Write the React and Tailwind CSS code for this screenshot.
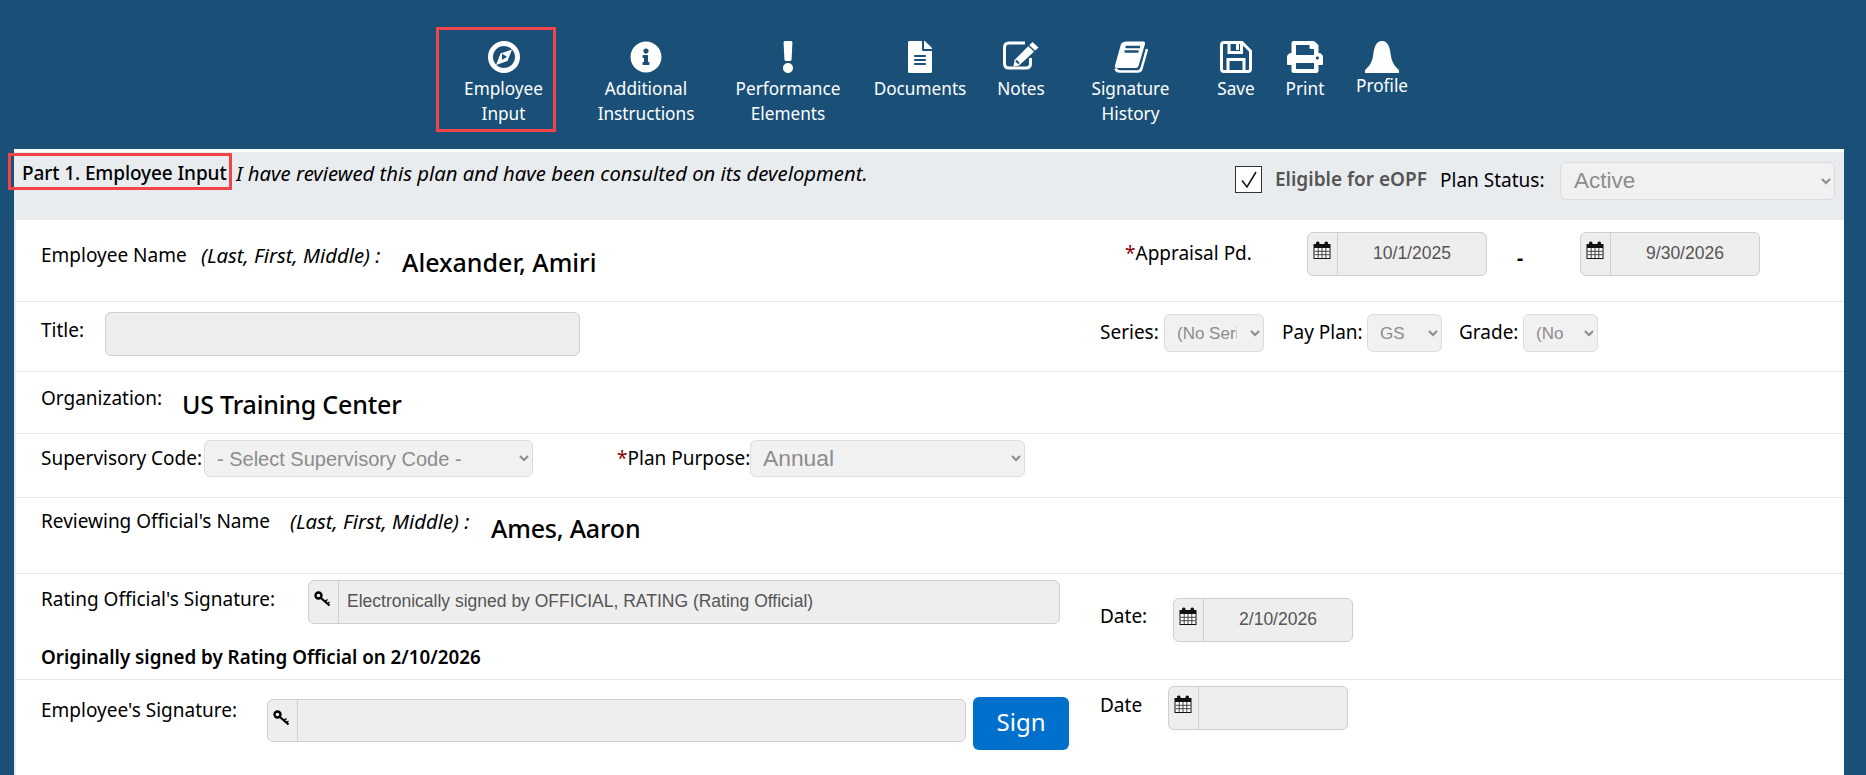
import React from "react";
import { FaInfoCircle, FaExclamation, FaFileAlt, FaPrint } from "react-icons/fa";

const NAV_BG = "#1a5078";

function CompassIcon() {
  return (
    <svg width="32" height="32" viewBox="0 0 32 32">
      <circle cx="16" cy="16" r="13.500" fill="none" stroke="white" strokeWidth="5" />
      <path
        fillRule="evenodd"
        fill="white"
        d="M24 8.500L19.500 20L8 24L12.500 12.500ZM14 12.800V19L19 15.800Z"
      />
    </svg>
  );
}

function EditIcon() {
  return (
    <svg width="36" height="30" viewBox="0 0 36 30">
      <path
        d="M22 2H6Q1.500 2 1.500 6.500V22.500Q1.500 27 6 27H23Q27.500 27 27.500 22.500V17"
        fill="none"
        stroke="white"
        strokeWidth="3"
      />
      <path d="M29.500 1L35.500 6.500L16 24.500L10.500 25.500L11.500 19Z" fill="white" />
      <path d="M25.500 4.500L32 10.500" stroke={NAV_BG} strokeWidth="1.500" />
      <path d="M13 19.500L16 22.500" stroke={NAV_BG} strokeWidth="2" />
    </svg>
  );
}

function BookIcon() {
  return (
    <svg width="34" height="32" viewBox="0 0 34 32">
      <path d="M10 1Q10.500 .5 12 .5H29Q31.500 .5 31 3L24.500 25Q24 27 22 27H3Q.5 27 1 24.500L7 3Q7.500 1.500 10 1Z" fill="white" />
      <path d="M11.500 6H26M10.500 10.500H24.500" stroke={NAV_BG} strokeWidth="2.500" />
      <path d="M1.500 27.500Q2.500 30.500 6 30.500H23.500Q26.500 30.500 27.500 27.500L33 8" fill="none" stroke="white" strokeWidth="2.500" />
    </svg>
  );
}

function SaveIcon() {
  return (
    <svg width="32" height="32" viewBox="0 0 32 32" fill="none" stroke="white" strokeWidth="3">
      <path d="M4 1.500H22L30.500 10V28Q30.500 30.500 28 30.500H4Q1.500 30.500 1.500 28V4Q1.500 1.500 4 1.500Z" />
      <path d="M8 30V18.500H24V30" />
      <path d="M9 2V11.500H21.500V2" />
      <path d="M17.500 3V9" />
    </svg>
  );
}

function BellIcon() {
  return (
    <svg width="36" height="32" viewBox="0 0 36 33" fill="white">
      <path d="M18 0C24 0 26 6 27 14C28 22 31 26 35.500 30L35.500 33L.5 33L.5 30C5 26 8 22 9 14C10 6 12 0 18 0Z" />
    </svg>
  );
}

const navItems = [
  { label: ["Employee", "Input"], icon: <CompassIcon />, width: "w-[141px]" },
  { label: ["Additional", "Instructions"], icon: <FaInfoCircle size={32} />, width: "w-[144px]" },
  { label: ["Performance", "Elements"], icon: <FaExclamation size={32} />, width: "w-[140px]" },
  { label: ["Documents"], icon: <FaFileAlt size={32} />, width: "w-[124px]" },
  { label: ["Notes"], icon: <EditIcon />, width: "w-[78px]" },
  { label: ["Signature", "History"], icon: <BookIcon />, width: "w-[141px]" },
  { label: ["Save"], icon: <SaveIcon />, width: "w-[70px]" },
  {
    label: ["Print"],
    icon: <FaPrint className="h-[32px] w-[36px]" preserveAspectRatio="none" />,
    width: "w-[68px]",
  },
  { label: ["Profile"], icon: <BellIcon />, width: "w-[86px]", tight: true },
];

function CalendarIcon() {
  return (
    <svg width="18" height="18" viewBox="0 0 18 18">
      <rect x="0.500" y="3" width="17" height="15" fill="#111" />
      <rect x="3" y="0.500" width="3.500" height="6" rx="1.500" fill="#111" />
      <rect x="11.500" y="0.500" width="3.500" height="6" rx="1.500" fill="#111" />
      <rect x="1.500" y="7" width="15" height="10" fill="#fff" />
      <path
        d="M5.200 7V17M9 7V17M12.800 7V17M1.500 10.300H16.500M1.500 13.700H16.500"
        stroke="#444"
        strokeWidth="1"
      />
    </svg>
  );
}

function KeyIcon() {
  return (
    <svg width="17" height="16" viewBox="0 0 17 16" fill="none" stroke="#000">
      <circle cx="4.500" cy="4.500" r="3" strokeWidth="2.400" />
      <path d="M7 7L15.500 14.500" strokeWidth="2.200" />
      <path d="M11 10.500L13.500 8.500M13.500 12.500L15.500 11" strokeWidth="1.500" />
    </svg>
  );
}

// grey read-only input with the little icon box on its left
function AddonInput({ icon, text, width, height = "h-[44px]", margin, align = "text-center", iconTop = "pt-2" }) {
  return (
    <div
      className={`flex shrink-0 ${width} ${height} ${margin} rounded-[6px] border border-[#cfcfcf] bg-[#eeeeee] overflow-hidden`}
    >
      <div className={`w-[30px] shrink-0 border-r border-[#cfcfcf] pl-[5px] ${iconTop}`}>{icon}</div>
      <div
        className={`flex-1 px-2 pb-[2px] flex items-center text-[17.500px] text-[#555] font-['Liberation_Sans',sans-serif] whitespace-nowrap ${align === "text-center" ? "justify-center" : ""}`}
      >
        {text}
      </div>
    </div>
  );
}

function Label({ children, className = "" }) {
  return <div className={`shrink-0 whitespace-nowrap text-[19px] leading-6 text-black ${className}`}>{children}</div>;
}

function Italic({ children, className = "" }) {
  return <div className={`shrink-0 whitespace-nowrap text-[20.300px] leading-6 italic text-black ${className}`}>{children}</div>;
}

function Name({ children, className = "" }) {
  return <div className={`shrink-0 whitespace-nowrap text-[25px] leading-8 font-medium text-black ${className}`}>{children}</div>;
}

function Select({ option, className = "" }) {
  return (
    <select
      disabled
      className={`shrink-0 rounded-[6px] border border-[#dcdcdc] bg-[#f1f1f1] text-[#8c8c8c] font-['Liberation_Sans',sans-serif] ${className}`}
    >
      <option>{option}</option>
    </select>
  );
}

export default function App() {
  return (
    <div className="relative h-[775px] w-[1866px] overflow-hidden bg-[#1a5078] font-['Noto_Sans',sans-serif]">
      {/* top nav */}
      <div className="flex h-[149px] pl-[433px] pt-[41px] text-white">
        {navItems.map((item) => (
          <div key={item.label[0]} className={`${item.width} flex flex-col items-center text-center`}>
            <div className="h-[32px]">{item.icon}</div>
            <div className={`${item.tight ? "mt-0" : "mt-[3px]"} whitespace-nowrap text-[17.200px] leading-[25px]`}>
              {item.label.map((line) => (
                <div key={line}>{line}</div>
              ))}
            </div>
          </div>
        ))}
      </div>

      {/* red annotation boxes */}
      <div className="absolute left-[436px] top-[27px] h-[105px] w-[120px] border-[3px] border-[#f04448]" />
      <div className="absolute left-[8px] top-[153px] h-[37px] w-[224px] border-[3px] border-[#f04448]" />

      <div className="ml-[14px] h-[626px] w-[1830px] bg-white pt-[3px]">
        {/* part header band */}
        <div className="flex h-[68px] items-start bg-[#e9ecef] pl-2 pr-[9px]">
          <div className="mt-[9px] w-[214px] shrink-0 whitespace-nowrap text-[19px] leading-6 font-medium tracking-[-0.1px] text-black">
            Part 1. Employee Input
          </div>
          <Italic className="mt-[9px]">I have reviewed this plan and have been consulted on its development.</Italic>
          <div className="ml-auto flex items-start">
            <div className="mt-[14px] flex h-[27px] w-[27px] items-center justify-center border border-[#333] bg-white">
              <svg width="20" height="20" viewBox="0 0 20 20" fill="none" stroke="#111" strokeWidth="1.500">
                <path d="M3 10.500L8 17L17 2" />
              </svg>
            </div>
            <div className="ml-[13px] mt-[15px] w-[152px] whitespace-nowrap text-[19px] leading-6 font-semibold text-[#555]">
              Eligible for eOPF
            </div>
            <Label className="ml-[13px] mt-4 w-[120px]">Plan Status:</Label>
            <Select option="Active" className="mt-[10px] h-[38px] w-[275px] pb-[2px] pl-[9px] text-[22.500px]" />
          </div>
        </div>

        <div className="border-l-2 border-[#e9ecef]">
          {/* employee name */}
          <div className="flex h-[82px] items-start border-b border-[#e9e9e9] pl-[25px]">
            <Label className="mt-[23px] w-[160px]">Employee Name</Label>
            <Italic className="mt-[23px] w-[201px]">(Last, First, Middle) :</Italic>
            <Name className="mt-[26px] w-[723px]">Alexander, Amiri</Name>
            <Label className="mt-[21px] w-[182px]">
              <span className="text-[#8b0000]">*</span>Appraisal Pd.
            </Label>
            <AddonInput icon={<CalendarIcon />} text="10/1/2025" width="w-[180px]" margin="mt-3" />
            <Label className="mt-[26px] w-[93px] pl-[30px] font-bold">-</Label>
            <AddonInput icon={<CalendarIcon />} text="9/30/2026" width="w-[180px]" margin="mt-3" />
          </div>

          {/* title, series, pay plan, grade */}
          <div className="flex h-[70px] items-start border-b border-[#e9e9e9] pl-[25px]">
            <Label className="mt-4 w-[64px]">Title:</Label>
            <div className="mt-[10px] h-[44px] w-[475px] shrink-0 rounded-[6px] border border-[#cfcfcf] bg-[#eeeeee]" />
            <div className="w-[520px] shrink-0" />
            <Label className="mt-[18px] w-[64px]">Series:</Label>
            <Select option="(No Series)" className="mt-3 h-[38px] w-[100px] pl-2 pr-[10px] text-[17px]" />
            <Label className="ml-[18px] mt-[18px] w-[85px]">Pay Plan:</Label>
            <Select option="GS" className="mt-3 h-[38px] w-[75px] pl-2 pr-[10px] text-[17px]" />
            <Label className="ml-[17px] mt-[18px] w-[64px]">Grade:</Label>
            <Select option="(No Grade)" className="mt-3 h-[38px] w-[75px] pl-2 pr-[16px] text-[17px]" />
          </div>

          {/* organization */}
          <div className="flex h-[62px] items-start border-b border-[#e9e9e9] pl-[25px]">
            <Label className="mt-[14px] w-[141px]">Organization:</Label>
            <Name className="mt-4 tracking-[-0.2px]">US Training Center</Name>
          </div>

          {/* supervisory code, plan purpose */}
          <div className="flex h-[64px] items-start border-b border-[#e9e9e9] pl-[25px]">
            <Label className="mt-3 w-[163px]">Supervisory Code:</Label>
            <Select option="- Select Supervisory Code -" className="mt-[6px] h-[37px] w-[329px] pl-2 text-[20px]" />
            <div className="w-[84px] shrink-0" />
            <Label className="mt-3 w-[133px]">
              <span className="text-[#8b0000]">*</span>Plan Purpose:
            </Label>
            <Select option="Annual" className="mt-[6px] h-[37px] w-[275px] pb-[2px] pl-2 text-[22.800px]" />
          </div>

          {/* reviewing official */}
          <div className="flex h-[76px] items-start border-b border-[#e9e9e9] pl-[25px]">
            <Label className="mt-[11px] w-[249px]">Reviewing Official's Name</Label>
            <Italic className="mt-[11px] w-[201px]">(Last, First, Middle) :</Italic>
            <Name className="mt-[14px] tracking-[-0.2px]">Ames, Aaron</Name>
          </div>

          {/* rating official signature */}
          <div className="flex h-[106px] items-start border-b border-[#e9e9e9] pl-[25px]">
            <div className="w-[1019px] shrink-0">
              <div className="flex items-start">
                <Label className="mt-[13px] w-[267px]">Rating Official's Signature:</Label>
                <AddonInput
                  icon={<KeyIcon />}
                  text="Electronically signed by OFFICIAL, RATING (Rating Official)"
                  width="w-[752px]"
                  margin="mt-[6px]"
                  align="text-left"
                  iconTop="pt-[10px]"
                />
              </div>
              <div className="mt-[21px] whitespace-nowrap text-[18.800px] leading-6 font-semibold text-black">
                Originally signed by Rating Official on 2/10/2026
              </div>
            </div>
            <Label className="ml-[40px] mt-[30px] w-[73px]">Date:</Label>
            <AddonInput icon={<CalendarIcon />} text="2/10/2026" width="w-[180px]" margin="mt-6" />
          </div>

          {/* employee signature */}
          <div className="flex h-[95px] items-start pl-[25px]">
            <Label className="mt-[18px] w-[226px]">Employee's Signature:</Label>
            <AddonInput
              icon={<KeyIcon />}
              text=""
              width="w-[699px]"
              height="h-[43px]"
              margin="mt-[19px]"
              iconTop="pt-[10px]"
            />
            <button className="ml-[7px] mt-[17px] h-[53px] w-[96px] shrink-0 rounded-[6px] bg-[#0070cc] pb-[3px] text-[24px] text-white">
              Sign
            </button>
            <Label className="ml-[31px] mt-[13px] w-[68px]">Date</Label>
            <AddonInput icon={<CalendarIcon />} text="" width="w-[180px]" margin="mt-[6px]" />
          </div>
        </div>
      </div>
    </div>
  );
}
